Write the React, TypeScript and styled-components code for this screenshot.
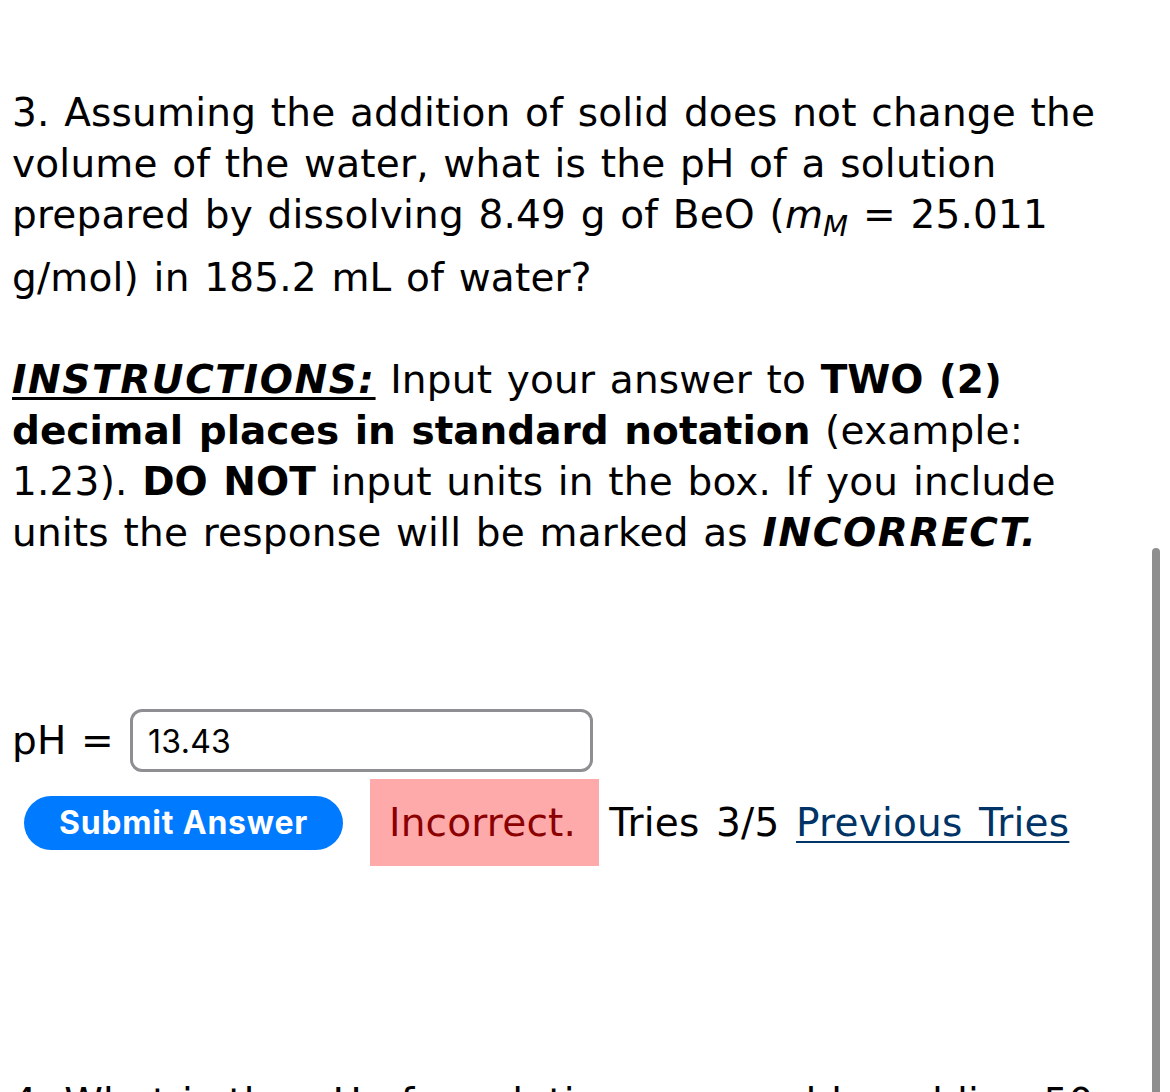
import React from "react";
import styled, { createGlobalStyle } from "styled-components";

const GlobalStyle = createGlobalStyle`
  html, body {
    margin: 0;
    padding: 0;
    height: 100%;
    overflow: hidden;
    background: #ffffff;
  }
  body {
    font-family: "DejaVu Sans", Verdana, sans-serif;
    font-size: 39px;
    line-height: 51px;
    color: #000000;
    word-spacing: 2px;
    letter-spacing: 0.2px;
  }
`;

const Page = styled.div`
  padding: 87px 40px 0 12px;
`;

const Question = styled.p<{ $gap?: number }>`
  margin: 0 0 ${(p) => p.$gap ?? 0}px;
`;

const Mass = styled.i`
  font-style: italic;
`;

const Sub = styled.sub`
  font-size: 29px;
  font-style: italic;
  vertical-align: -8px;
  line-height: 51px;
`;

const Strong = styled.b`
  font-weight: bold;
  letter-spacing: 0;
`;

const Emph = styled.b<{ $underline?: boolean }>`
  font-weight: bold;
  font-style: italic;
  letter-spacing: 1.6px;
  text-decoration: ${(p) => (p.$underline ? "underline" : "none")};
  text-decoration-thickness: 3px;
  text-underline-offset: 4px;
`;

const AnswerRow = styled.div`
  display: flex;
  align-items: center;
  gap: 16px;
  margin-top: 151px;
  height: 63px;
`;

const AnswerInput = styled.input`
  box-sizing: border-box;
  width: 463px;
  height: 63px;
  border: 3px solid #8e8e93;
  border-radius: 12px;
  padding: 2px 0 0 15px;
  font-family: Inter, "Liberation Sans", sans-serif;
  font-size: 32px;
  letter-spacing: 0.3px;
  color: #000000;
  background: #ffffff;
  outline: none;
`;

const SubmitRow = styled.div`
  display: flex;
  align-items: center;
  margin-top: 7px;
  padding-left: 12px;
`;

const SubmitButton = styled.button`
  width: 319px;
  height: 54px;
  border: none;
  border-radius: 27px;
  background: #007aff;
  color: #ffffff;
  font-family: Inter, "Liberation Sans", sans-serif;
  font-weight: 700;
  font-size: 32px;
  letter-spacing: 0.8px;
  padding: 0;
  cursor: pointer;
`;

const Feedback = styled.span`
  margin-left: 27px;
  padding: 18px 23px 18px 19px;
  background: #ffaaaa;
  color: #8b0000;
`;

const Tries = styled.span`
  margin-left: 10px;
  word-spacing: 4px;
`;

const TriesLink = styled.a`
  color: #003366;
  text-decoration: underline;
  text-decoration-thickness: 2px;
  text-underline-offset: 5px;
`;

const NextQuestion = styled.p`
  margin: 211px 0 0;
  white-space: nowrap;
`;

const ScrollThumb = styled.div`
  position: fixed;
  top: 548px;
  right: 10px;
  bottom: 0;
  width: 8px;
  border-radius: 4px 4px 0 0;
  background: #8e8e8e;
`;

export default function App() {
  return (
    <>
      <GlobalStyle />
      <Page>
        <Question $gap={51}>
          3. Assuming the addition of solid does not change the volume of the
          water, what is the pH of a solution prepared by dissolving 8.49 g of
          BeO (<Mass>m</Mass>
          <Sub>M</Sub> = 25.011 g/mol) in 185.2 mL of water?
        </Question>
        <Question>
          <Emph $underline>INSTRUCTIONS:</Emph> Input your answer to{" "}
          <Strong>TWO (2) decimal places in standard notation</Strong>{" "}
          (example: 1.23). <Strong>DO NOT</Strong> input units in the box. If
          you include units the response will be marked as{" "}
          <Emph>INCORRECT.</Emph>
        </Question>

        <AnswerRow>
          <span>pH =</span>
          <AnswerInput defaultValue="13.43" />
        </AnswerRow>

        <SubmitRow>
          <SubmitButton>Submit Answer</SubmitButton>
          <Feedback>Incorrect.</Feedback>
          <Tries>
            Tries 3/5 <TriesLink href="#">Previous Tries</TriesLink>
          </Tries>
        </SubmitRow>

        <NextQuestion>
          4. What is the pH of a solution prepared by adding 50
        </NextQuestion>
      </Page>
      <ScrollThumb />
    </>
  );
}
